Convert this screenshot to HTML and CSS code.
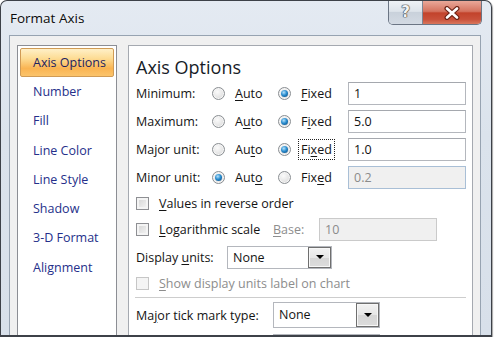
FILE: index.html
```html
<!DOCTYPE html>
<html lang="en">
<head>
    <meta charset="UTF-8">
    <title>Format Axis</title>
    <link rel="stylesheet" href="styles.css">
</head>
<body>
    <div class="window">
        <div class="titlebar">
            <span class="caption">Format Axis</span>
            <div class="caption-buttons">
                <span class="btn-help">?</span>
                <span class="btn-close">
                    <svg width="18" height="14" viewBox="0 0 18 14">
                        <path d="M4 2.5 L14 11.5 M14 2.5 L4 11.5" stroke="#6e2416" stroke-width="5" stroke-linecap="round"/>
                        <path d="M4 2.5 L14 11.5 M14 2.5 L4 11.5" stroke="#fff" stroke-width="2.6" stroke-linecap="round"/>
                    </svg>
                </span>
            </div>
        </div>

        <div class="client">
            <ul class="nav">
                <li class="active">Axis Options</li>
                <li>Number</li>
                <li>Fill</li>
                <li>Line Color</li>
                <li>Line Style</li>
                <li>Shadow</li>
                <li>3-D Format</li>
                <li>Alignment</li>
            </ul>

            <div class="pane">
                <h2>Axis Options</h2>

                <div class="bounds">
                    <div class="bound-row">
                        <span class="lbl">Minimum:</span>
                        <span class="opt"><span class="radio"></span><span><u>A</u>uto</span></span>
                        <span class="opt"><span class="radio on"></span><span><u>F</u>ixed</span></span>
                        <span class="field">1</span>
                    </div>
                    <div class="bound-row">
                        <span class="lbl">Maximum:</span>
                        <span class="opt"><span class="radio"></span><span>A<u>u</u>to</span></span>
                        <span class="opt"><span class="radio on"></span><span>F<u>i</u>xed</span></span>
                        <span class="field">5.0</span>
                    </div>
                    <div class="bound-row">
                        <span class="lbl">Major unit:</span>
                        <span class="opt"><span class="radio"></span><span>Au<u>t</u>o</span></span>
                        <span class="opt"><span class="radio on"></span><span class="focus">Fi<u>x</u>ed</span></span>
                        <span class="field">1.0</span>
                    </div>
                    <div class="bound-row">
                        <span class="lbl">Minor unit:</span>
                        <span class="opt"><span class="radio on"></span><span>Aut<u>o</u></span></span>
                        <span class="opt"><span class="radio"></span><span>Fix<u>e</u>d</span></span>
                        <span class="field disabled blue">0.2</span>
                    </div>
                </div>

                <div class="row check-row">
                    <span class="check"></span><span><u>V</u>alues in reverse order</span>
                </div>

                <div class="row log-row">
                    <span class="log-label"><span class="check"></span><span><u>L</u>ogarithmic scale</span></span>
                    <span class="base-label muted"><u>B</u>ase:</span>
                    <span class="field disabled base-field">10</span>
                </div>

                <div class="row units-row">
                    <span class="units-label">Display <u>u</u>nits:</span>
                    <span class="combo units-combo">
                        <span class="combo-text">None</span>
                        <span class="combo-btn"><span class="arrow"></span></span>
                    </span>
                </div>

                <div class="row check-row muted">
                    <span class="check off"></span><span><u>S</u>how display units label on chart</span>
                </div>

                <div class="separator"></div>

                <div class="row tick-row">
                    <span class="tick-label">Ma<u>j</u>or tick mark type:</span>
                    <span class="combo tick-combo">
                        <span class="combo-text">None</span>
                        <span class="combo-btn"><span class="arrow"></span></span>
                    </span>
                </div>

                <div class="row tick-row next">
                    <span class="tick-label"></span>
                    <span class="combo tick-combo">
                        <span class="combo-text"></span>
                        <span class="combo-btn"><span class="arrow"></span></span>
                    </span>
                </div>
            </div>
        </div>
    </div>
</body>
</html>
```

FILE: styles.css
```css
body {
    margin: 0;
    background: #fff;
    font-family: "Open Sans", "Noto Sans", sans-serif;
    font-size: 12.5px;
    color: #141414;
}
u {
    text-decoration: underline;
    text-underline-offset: 2px;
}

/* window frame */
.window {
    box-sizing: border-box;
    width: 492px;
    height: 337px;
    border: 1px solid #3d4148;
    border-bottom-width: 2px;
    border-radius: 7px 7px 0 0;
    background: linear-gradient(to bottom, #e4eaf2, #dbe3ec 40%, #d8e0ea);
    box-shadow: 1px 1px 1px rgba(0,0,0,0.35);
    display: flex;
    flex-direction: column;
    overflow: hidden;
}
.titlebar {
    height: 34px;
    display: flex;
    align-items: flex-start;
    flex-shrink: 0;
}
.caption {
    padding: 8px 0 0 9px;
    font-size: 13.5px;
    line-height: 18px;
    color: #0b0b0b;
    text-shadow: 0 0 6px rgba(255,255,255,0.9);
}
.caption-buttons {
    margin-left: auto;
    margin-right: 9px;
    display: flex;
    height: 23px;
    border: 1px solid #6b7584;
    border-top: none;
    border-radius: 0 0 5px 5px;
    overflow: hidden;
}
.btn-help {
    width: 33px;
    background: linear-gradient(to bottom, #eef2f6, #dde3ea 45%, #c9d1db 50%, #d3dae3);
    border-right: 1px solid #7d8694;
    text-align: center;
    font: bold 15px/22px "DejaVu Sans", sans-serif;
    color: #f2f3f5;
    text-shadow: 0 0 1px #444, 0 0 1px #444, 0 0 1px #444, 0 0 1px #444;
}
.btn-close {
    width: 58px;
    background: linear-gradient(to bottom, #e9a899, #d4735f 45%, #c2432b 52%, #c9513a 80%, #d9765c);
    display: flex;
    align-items: center;
    justify-content: center;
}

/* client area */
.client {
    flex: 1;
    min-height: 0;
    margin: 0 10px 0 8px;
    border: 1px solid #97a3b1;
    border-bottom: none;
    background: #f0f0f0;
    padding: 9px 7px 0 7px;
    display: flex;
    gap: 11px;
}

/* category list */
.nav {
    list-style: none;
    margin: 0;
    width: 100px;
    box-sizing: border-box;
    padding: 2px 2px 0 2px;
    background: #fff;
    border: 1px solid #8c8e94;
    border-bottom: none;
}
.nav li {
    height: 29.3px;
    line-height: 29px;
    padding-left: 13px;
    color: #252f8a;
    box-sizing: border-box;
    white-space: nowrap;
}
.nav li.active {
    height: 29px;
    line-height: 27px;
    padding-left: 12px;
    border: 1px solid #d09b55;
    border-radius: 2px;
    background: linear-gradient(to bottom, #fff0c8 0%, #fddc94 35%, #fab452 72%, #fbc46c 100%);
    color: #1d2260;
}

/* options pane */
.pane {
    flex: 1;
    background: #fff;
    border: 1px solid #a5a9b0;
    border-bottom: none;
    padding: 9px 6px 0 7px;
    overflow: hidden;
}
.pane h2 {
    margin: 0;
    font-size: 18px;
    font-weight: normal;
    line-height: 24px;
    color: #171c28;
}
.bound-row {
    height: 28px;
    display: grid;
    grid-template-columns: 76px 66px 70px 118px;
    align-items: center;
}
.opt {
    display: flex;
    align-items: center;
    gap: 10px;
}
.radio {
    box-sizing: border-box;
    width: 13px;
    height: 13px;
    border: 1px solid #8a8e92;
    border-radius: 50%;
    background: radial-gradient(circle at 40% 35%, #fbfbfb, #e6e6e6 55%, #cdcdcd);
    box-shadow: inset 0 0 0 1px #f6f6f6;
    display: flex;
    align-items: center;
    justify-content: center;
}
.radio.on::after {
    content: "";
    width: 7px;
    height: 7px;
    border-radius: 50%;
    background: radial-gradient(circle at 40% 35%, #b6e2fb, #2b8ed0 45%, #0d4f85 90%);
}
.focus {
    outline: 1px dotted #222;
    outline-offset: 1px;
    padding: 0 1px;
    margin-left: -1px;
}
.field {
    box-sizing: border-box;
    height: 23px;
    border: 1px solid #b4b7bd;
    border-top-color: #a5a8ae;
    padding-left: 5px;
    line-height: 21px;
    color: #111;
    background: #fff;
}
.field.disabled {
    background: #f0f0f0;
    color: #8b8b8b;
    border-color: #cacaca;
}
.field.blue {
    border-color: #a9bfd6;
}

.row {
    display: flex;
    align-items: center;
}
.check-row {
    height: 24px;
    gap: 10px;
}
.check {
    box-sizing: border-box;
    width: 13px;
    height: 13px;
    flex-shrink: 0;
    border: 1px solid #8e8f93;
    background: linear-gradient(135deg, #d2d2d2, #f7f7f7);
    box-shadow: inset 0 0 0 2px #f4f4f4;
}
.check.off {
    border-color: #c6c6c6;
    background: #f4f4f4;
    box-shadow: none;
}
.muted {
    color: #8d8d8d;
}
.log-row {
    height: 28px;
}
.log-label {
    width: 137px;
    display: flex;
    align-items: center;
    gap: 10px;
    white-space: nowrap;
}
.base-label {
    width: 46px;
}
.base-field {
    width: 118px;
}

.units-row {
    height: 28px;
}
.units-label {
    width: 91px;
}
.combo {
    box-sizing: border-box;
    display: flex;
    border: 1px solid #b4b7bd;
    background: #fff;
}
.combo-text {
    flex: 1;
    padding-left: 5px;
}
.combo-btn {
    box-sizing: border-box;
    width: 23px;
    border: 1px solid #6f6f6f;
    box-shadow: inset 0 0 0 1px #f7f7f7;
    background: linear-gradient(to bottom, #f2f2f2, #e6e6e6 50%, #d6d6d6 52%, #dcdcdc);
    display: flex;
    align-items: center;
    justify-content: center;
}
.arrow {
    width: 0;
    height: 0;
    border-left: 4px solid transparent;
    border-right: 4px solid transparent;
    border-top: 4px solid #000;
}
.units-combo {
    width: 105px;
    height: 23px;
    line-height: 21px;
}
.separator {
    height: 1px;
    margin: 2px 0 1px -1px;
    width: 331px;
    background: #cdcdcd;
}
.tick-row {
    height: 32px;
}
.tick-label {
    width: 137px;
    white-space: nowrap;
}
.tick-combo {
    width: 107px;
    height: 26px;
    line-height: 24px;
}
.tick-row.next {
    margin-top: 3px;
    align-items: flex-start;
}
```
